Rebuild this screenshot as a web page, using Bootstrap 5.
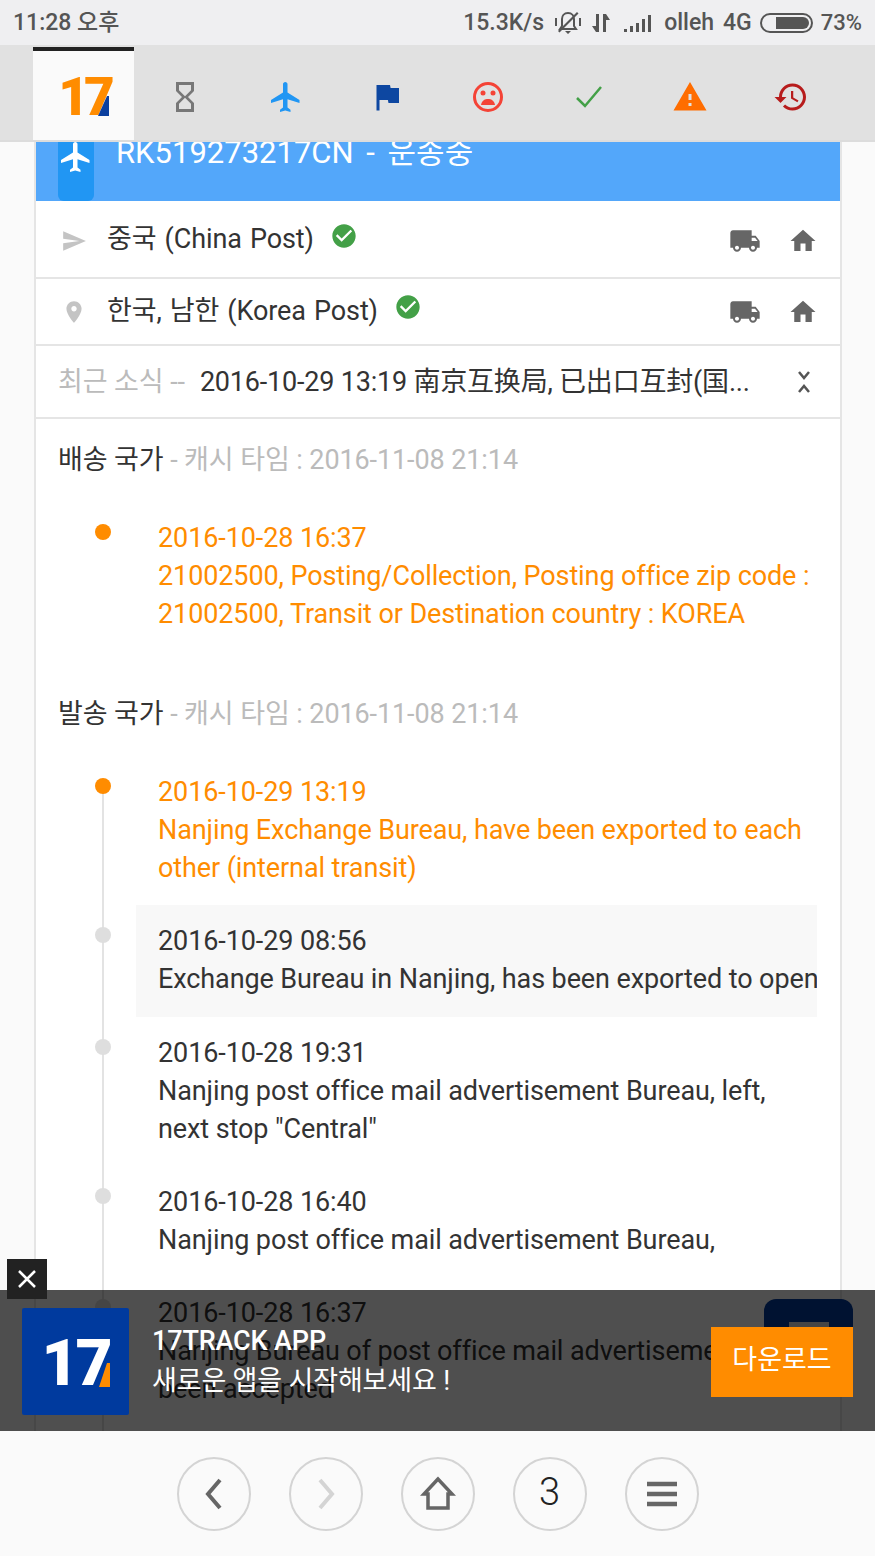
<!DOCTYPE html>
<html lang="ko">
<head>
    <meta charset="UTF-8">
    <title>17TRACK</title>
    <link href="https://cdn.jsdelivr.net/npm/bootstrap@5.3.3/dist/css/bootstrap.min.css" rel="stylesheet">
    <style>
        html, body { height: 100%; }
        body {
            width: 875px; height: 1556px; overflow: hidden; background: #fafafa;
            font-family: Roboto, "Noto Sans CJK KR", "Noto Sans CJK SC", sans-serif;
            font-size: 27px; line-height: 38px; color: #333;
        }
        .phone-bar { height: 45px; padding: 0 13px; background: #efeff1; color: #555; font-size: 23px; font-weight: 500; line-height: 45px; }
        .phone-bar svg { flex: none; fill: #555; }
        .tab-bar { height: 97px; padding-left: 33px; background: #e1e1e1; border-bottom: 2px solid #dcdcdc; }
        .tab-item { width: 101px; height: 93px; margin-top: 2px; padding-top: 6px; }
        .tab-item.is-on { background: #fafafa; border-top: 4px solid #222; padding-top: 3px; }
        .logo-text { font-family: Roboto, sans-serif; font-size: 53px; font-weight: 900; color: #ff8c00; letter-spacing: -5px; line-height: 53px; }
        .logo-wedge { margin-left: -13px; margin-top: 17px; }
        .page-area { height: 1289px; overflow: hidden; }
        .track-panel { width: 808px; height: 100%; margin-left: 34px; background: #fff; border-left: 2px solid #e5e5e5; border-right: 2px solid #e5e5e5; letter-spacing: -.1px; }
        .track-head { height: 59px; background: #53a7fa; color: #fff; overflow: hidden; }
        .head-tab { width: 36px; height: 59px; margin-left: 22px; background: #2196f3; border-radius: 0 0 6px 6px; }
        .head-tab svg { margin-top: -3px; }
        .head-title { margin-left: 22px; margin-top: -8px; font-size: 31px; letter-spacing: 0; word-spacing: 5px; }
        .post-row { padding-left: 25px; padding-right: 22px; border-bottom: 2px solid #e5e5e5; }
        .row-a { height: 78px; padding-top: 3px; }
        .row-b { height: 67px; }
        .row-c { height: 73px; padding-left: 22px; padding-right: 27px; }
        .post-name { margin-left: 20px; margin-top: -4px; word-spacing: 1.5px; }
        .row-b .post-name { margin-top: -1px; }
        .ok-mark { margin-left: 16px; margin-top: -9px; }
        .news-label { color: #bbb; margin-right: 15px; white-space: nowrap; }
        .news-text { letter-spacing: -.2px; }
        .sec-title { padding-left: 22px; }
        .sec-title span { color: #bbb; }
        .sec-one { padding-top: 22px; margin-bottom: 23px; }
        .sec-two { margin-top: 44px; margin-bottom: 23px; }
        .time-list { position: relative; margin: 0 23px 0 100px; }
        .time-list.with-line::before { content: ""; position: absolute; left: -34px; top: 30px; bottom: -300px; width: 2px; background: #e3e3e3; }
        .time-item { position: relative; padding: 17px 0 18px 22px; white-space: nowrap; }
        .time-item::before { content: ""; position: absolute; left: -41px; top: 22px; width: 16px; height: 16px; border-radius: 50%; background: #dedede; }
        .time-item.is-new { color: #ff8c00; }
        .time-item.is-new::before { background: #ff8c00; }
        .time-item.is-shade { padding: 0; }
        .time-fill { padding: 17px 0 19px 22px; background: #f8f8f8; overflow: hidden; }
        .top-btn { position: absolute; left: 764px; top: 1157px; width: 89px; height: 60px; background: #003a9e; border-radius: 12px 12px 0 0; }
        .top-btn i { position: absolute; left: 25px; top: 23px; width: 40px; height: 37px; background: #ddd; }
        .ad-wrap { position: absolute; left: 0; right: 0; top: 1148px; height: 141px; background: rgba(0, 0, 0, .69); }
        .ad-close { position: absolute; left: 7px; top: -31px; width: 40px; height: 40px; background: #222; }
        .ad-logo { position: absolute; left: 22px; top: 18px; width: 107px; height: 107px; padding-top: 4px; background: #003a9e; border-radius: 2px; }
        .ad-logo-text { font-family: Roboto, sans-serif; font-size: 64px; font-weight: 900; color: #fff; letter-spacing: -3px; line-height: 64px; }
        .ad-copy { position: absolute; left: 152px; top: 31px; color: #fff; font-size: 27px; line-height: 40px; letter-spacing: -.15px; }
        .ad-copy b { font-weight: 500; display: block; }
        .ad-btn { position: absolute; left: 711px; top: 37px; width: 142px; height: 70px; background: #ff8c00; border: 0; border-radius: 0; color: #fff; font-size: 27px; padding: 0 0 4px; }
        .bottom-bar { height: 125px; padding-top: 26px; gap: 38px; background: #fafafa; }
        .round-btn { width: 74px; height: 74px; border: 2px solid #d4d4d4; border-radius: 50%; background: transparent; font-size: 38px; font-weight: 300; color: #222; padding: 0; line-height: 1; }
        .round-btn.is-count { padding-bottom: 4px; }
    </style>
</head>
<body>
    <!-- phone status bar -->
    <div class="phone-bar d-flex align-items-center">
        <span>11:28 오후</span>
        <span class="ms-auto">15.3K/s</span>
        <svg style="margin-left:10px" width="28" height="26" viewBox="0 0 28 26"><path d="M14 3c-4 0-6 3-6 6v7l-2 3h16l-2-3V9c0-3-2-6-6-6z" fill="none" stroke="#555" stroke-width="2"/><path d="M11 21h6l-3 3zM4 21 23 2l1.500 1.500L5.500 22.500zM1 8h2v8H1zM25 8h2v8h-2z"/></svg>
        <svg style="margin-left:9px" width="20" height="22" viewBox="0 0 20 22"><path d="M5 2h3v18H5L1 14h4zM12 2h3l4 6h-4v12h-3z"/></svg>
        <svg style="margin-left:13px" width="27" height="18" viewBox="0 0 27 18"><path d="M0 15h3v3H0zM6 12h3v6H6zM12 9h3v9h-3zM18 5h3v13h-3zM24 1h3v17h-3z"/></svg>
        <span style="margin-left:13px">olleh</span>
        <span style="margin-left:9px">4G</span>
        <svg style="margin-left:8px" width="53" height="20" viewBox="0 0 53 20"><rect x="1" y="1" width="51" height="18" rx="9" fill="none" stroke="#555" stroke-width="2"/><path d="M16 4h27a6 6 0 0 1 0 12H16z"/></svg>
        <span style="margin-left:8px;font-size:22px">73%</span>
    </div>

    <!-- status tabs -->
    <div class="tab-bar d-flex">
        <div class="tab-item is-on d-flex align-items-center justify-content-center">
            <span class="logo-text">17</span>
            <svg class="logo-wedge" width="12" height="20" viewBox="0 0 12 20"><path d="M10 0h2v20H1z" fill="#0b3f9e"/></svg>
        </div>
        <div class="tab-item d-flex align-items-center justify-content-center">
            <svg width="36" height="36" viewBox="0 0 24 24" fill="#777"><path d="M6 2v6h.01L6 8.010 10 12l-4 4 .01.01H6V22h12v-5.990h-.01L18 16l-4-4 4-3.990-.01-.01H18V2H6zm10 14.500V20H8v-3.500l4-4 4 4zm-4-5l-4-4V4h8v3.500l-4 4z"/></svg>
        </div>
        <div class="tab-item d-flex align-items-center justify-content-center">
            <svg width="36" height="36" viewBox="0 0 24 24" fill="#2196f3"><path d="M21 16v-2l-8-5V3.500c0-.83-.67-1.500-1.500-1.500S10 2.670 10 3.500V9l-8 5v2l8-2.500V19l-2 1.500V22l3.500-1 3.500 1v-1.500L13 19v-5.500l8 2.500z"/></svg>
        </div>
        <div class="tab-item d-flex align-items-center justify-content-center">
            <svg width="36" height="36" viewBox="0 0 24 24" fill="#0d47a1"><path d="M14.400 6L14 4H5v17h2v-7h5.600l.4 2h7V6z"/></svg>
        </div>
        <div class="tab-item d-flex align-items-center justify-content-center">
            <svg width="32" height="32" viewBox="0 0 32 32"><circle cx="16" cy="16" r="13.500" fill="none" stroke="#f44336" stroke-width="3"/><circle cx="11" cy="12" r="2.500" fill="#f44336"/><circle cx="21" cy="12" r="2.500" fill="#f44336"/><path d="M9 24c1-5 4-6 7-6s6 1 7 6z" fill="#f44336"/></svg>
        </div>
        <div class="tab-item d-flex align-items-center justify-content-center">
            <svg width="30" height="30" viewBox="0 0 30 30"><path d="M3 16l8 8L27 5" fill="none" stroke="#43a047" stroke-width="2.500"/></svg>
        </div>
        <div class="tab-item d-flex align-items-center justify-content-center">
            <svg width="36" height="36" viewBox="0 0 24 24" fill="#ff6d00"><path d="M1 21h22L12 2 1 21zm12-3h-2v-2h2v2zm0-4h-2v-4h2v4z"/></svg>
        </div>
        <div class="tab-item d-flex align-items-center justify-content-center">
            <svg width="36" height="36" viewBox="0 0 24 24" fill="#b71c1c"><path d="M13 3c-4.970 0-9 4.030-9 9H1l3.890 3.890.07.14L9 12H6c0-3.870 3.130-7 7-7s7 3.130 7 7-3.130 7-7 7c-1.930 0-3.680-.79-4.940-2.060l-1.420 1.420C8.270 19.990 10.510 21 13 21c4.970 0 9-4.030 9-9s-4.030-9-9-9zm-1 5v5l4.280 2.540.72-1.210-3.500-2.080V8H12z"/></svg>
        </div>
    </div>

    <!-- scrolled page -->
    <div class="page-area position-relative">
        <div class="track-panel">
            <div class="track-head d-flex">
                <div class="head-tab d-flex justify-content-center">
                    <svg width="36" height="36" viewBox="0 0 24 24" fill="#fff"><path d="M21 16v-2l-8-5V3.500c0-.83-.67-1.500-1.500-1.500S10 2.670 10 3.500V9l-8 5v2l8-2.500V19l-2 1.500V22l3.500-1 3.500 1v-1.500L13 19v-5.500l8 2.500z"/></svg>
                </div>
                <div class="head-title">RK519273217CN - 운송중</div>
            </div>

            <div class="post-row row-a d-flex align-items-center">
                <svg width="26" height="26" viewBox="0 0 24 24" fill="#c4c4c4"><path d="M2.010 21L23 12 2.010 3 2 10l15 2-15 2z"/></svg>
                <span class="post-name">중국 (China Post)</span>
                <svg class="ok-mark" width="28" height="28" viewBox="0 0 24 24" fill="#43a047"><path d="M12 2C6.480 2 2 6.480 2 12s4.480 10 10 10 10-4.480 10-10S17.520 2 12 2zm-2 15l-5-5 1.410-1.410L10 14.170l7.590-7.590L19 8l-9 9z"/></svg>
                <svg class="ms-auto" width="32" height="32" viewBox="0 0 24 24" fill="#666"><path d="M20 8h-3V4H3c-1.100 0-2 .9-2 2v11h2c0 1.660 1.340 3 3 3s3-1.340 3-3h6c0 1.660 1.340 3 3 3s3-1.340 3-3h2v-5l-3-4zM6 18.500c-.83 0-1.500-.67-1.500-1.500s.67-1.500 1.500-1.500 1.500.67 1.500 1.500-.67 1.500-1.500 1.500zm13.500-9l1.960 2.500H17V9.500h2.500zm-1.500 9c-.83 0-1.500-.67-1.500-1.500s.67-1.500 1.500-1.500 1.500.67 1.500 1.500-.67 1.500-1.500 1.500z"/></svg>
                <svg style="margin-left:27px" width="30" height="30" viewBox="0 0 24 24" fill="#666"><path d="M10 20v-6h4v6h5v-8h3L12 3 2 12h3v8z"/></svg>
            </div>

            <div class="post-row row-b d-flex align-items-center">
                <svg width="26" height="26" viewBox="0 0 24 24" fill="#c4c4c4"><path d="M12 2C8.130 2 5 5.130 5 9c0 5.250 7 13 7 13s7-7.750 7-13c0-3.870-3.130-7-7-7zm0 9.500c-1.380 0-2.500-1.120-2.500-2.500s1.120-2.500 2.500-2.500 2.500 1.120 2.500 2.500-1.120 2.500-2.500 2.500z"/></svg>
                <span class="post-name">한국, 남한 (Korea Post)</span>
                <svg class="ok-mark" width="28" height="28" viewBox="0 0 24 24" fill="#43a047"><path d="M12 2C6.480 2 2 6.480 2 12s4.480 10 10 10 10-4.480 10-10S17.520 2 12 2zm-2 15l-5-5 1.410-1.410L10 14.170l7.590-7.590L19 8l-9 9z"/></svg>
                <svg class="ms-auto" width="32" height="32" viewBox="0 0 24 24" fill="#666"><path d="M20 8h-3V4H3c-1.100 0-2 .9-2 2v11h2c0 1.660 1.340 3 3 3s3-1.340 3-3h6c0 1.660 1.340 3 3 3s3-1.340 3-3h2v-5l-3-4zM6 18.500c-.83 0-1.500-.67-1.500-1.500s.67-1.500 1.500-1.500 1.500.67 1.500 1.500-.67 1.500-1.500 1.500zm13.500-9l1.960 2.500H17V9.500h2.500zm-1.500 9c-.83 0-1.500-.67-1.500-1.500s.67-1.500 1.500-1.500 1.500.67 1.500 1.500-.67 1.500-1.500 1.500z"/></svg>
                <svg style="margin-left:27px" width="30" height="30" viewBox="0 0 24 24" fill="#666"><path d="M10 20v-6h4v6h5v-8h3L12 3 2 12h3v8z"/></svg>
            </div>

            <div class="post-row row-c d-flex align-items-center">
                <span class="news-label">최근 소식 --</span>
                <span class="news-text text-nowrap">2016-10-29 13:19 南京互换局, 已出口互封(国...</span>
                <svg class="ms-auto" width="18" height="26" viewBox="0 0 18 26"><path d="M4 3l5 6 5-6M4 23l5-6 5 6" fill="none" stroke="#555" stroke-width="2.500"/></svg>
            </div>

            <div class="sec-title sec-one">배송 국가 <span>- 캐시 타임 : 2016-11-08 21:14</span></div>
            <div class="time-list">
                <div class="time-item is-new">2016-10-28 16:37<br>21002500, Posting/Collection, Posting office zip code :<br>21002500, Transit or Destination country : KOREA</div>
            </div>

            <div class="sec-title sec-two">발송 국가 <span>- 캐시 타임 : 2016-11-08 21:14</span></div>
            <div class="time-list with-line">
                <div class="time-item is-new">2016-10-29 13:19<br>Nanjing Exchange Bureau, have been exported to each<br>other (internal transit)</div>
                <div class="time-item is-shade">
                    <div class="time-fill">2016-10-29 08:56<br>Exchange Bureau in Nanjing, has been exported to open</div>
                </div>
                <div class="time-item">2016-10-28 19:31<br>Nanjing post office mail advertisement Bureau, left,<br>next stop "Central"</div>
                <div class="time-item">2016-10-28 16:40<br>Nanjing post office mail advertisement Bureau,</div>
                <div class="time-item">2016-10-28 16:37<br>Nanjing Bureau of post office mail advertisement Bureau,<br>been accepted</div>
            </div>
        </div>

        <div class="top-btn"><i></i></div>

        <!-- app banner over the page -->
        <div class="ad-wrap">
            <div class="ad-close d-flex align-items-center justify-content-center">
                <svg width="20" height="20" viewBox="0 0 20 20"><path d="M2 2l16 16M18 2L2 18" stroke="#fff" stroke-width="2.500"/></svg>
            </div>
            <div class="ad-logo d-flex align-items-center justify-content-center">
                <span class="ad-logo-text">17</span>
                <svg style="margin-left:-12px;margin-top:22px" width="12" height="24" viewBox="0 0 12 24"><path d="M9 0h3v24H1z" fill="#ff8c00"/></svg>
            </div>
            <div class="ad-copy"><b>17TRACK APP</b>새로운 앱을 시작해보세요 !</div>
            <button class="btn ad-btn" type="button">다운로드</button>
        </div>
    </div>

    <!-- browser toolbar -->
    <div class="bottom-bar d-flex justify-content-center">
        <button class="btn round-btn d-flex align-items-center justify-content-center" type="button">
            <svg width="24" height="36" viewBox="0 0 24 36"><path d="M18 4L6 18l12 14" fill="none" stroke="#666" stroke-width="4"/></svg>
        </button>
        <button class="btn round-btn d-flex align-items-center justify-content-center" type="button">
            <svg width="24" height="36" viewBox="0 0 24 36"><path d="M6 4l12 14L6 32" fill="none" stroke="#d4d4d4" stroke-width="4"/></svg>
        </button>
        <button class="btn round-btn d-flex align-items-center justify-content-center" type="button">
            <svg width="36" height="36" viewBox="0 0 36 36"><path d="M18 3L4 18h4v14h20V18h4z" fill="none" stroke="#666" stroke-width="3.500"/></svg>
        </button>
        <button class="btn round-btn is-count d-flex align-items-center justify-content-center" type="button">3</button>
        <button class="btn round-btn d-flex align-items-center justify-content-center" type="button">
            <svg width="32" height="30" viewBox="0 0 32 30"><path d="M1 5h30M1 15h30M1 25h30" stroke="#666" stroke-width="4.500"/></svg>
        </button>
    </div>

    <script src="https://cdn.jsdelivr.net/npm/bootstrap@5.3.3/dist/js/bootstrap.bundle.min.js"></script>
</body>
</html>
